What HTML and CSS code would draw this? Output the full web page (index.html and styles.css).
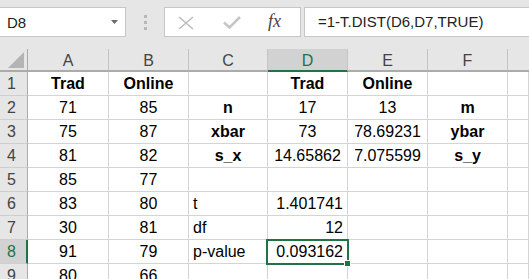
FILE: index.html
```html
<!DOCTYPE html>
<html>
<head>
<meta charset="utf-8">
<link rel="stylesheet" href="styles.css">
</head>
<body>
<div class="toolbar">
  <div class="namebox">
    <span class="name">D8</span>
    <svg class="drop" width="7" height="4" viewBox="0 0 7 4"><polygon points="0,0 7,0 3.5,4" fill="#6b6b6b"/></svg>
  </div>
  <svg class="grip" width="3" height="16" viewBox="0 0 3 16"><rect x="0" y="0" width="3" height="3" fill="#b8b8b8"/><rect x="0" y="6" width="3" height="3" fill="#b8b8b8"/><rect x="0" y="12" width="3" height="3" fill="#b8b8b8"/></svg>
  <div class="fxbox">
    <svg class="ico-x" width="16" height="14" viewBox="0 0 16 14"><path d="M1 1 L15 13 M15 1 L1 13" stroke="#bdbdbd" stroke-width="1.6" fill="none"/></svg>
    <svg class="ico-ok" width="18" height="13" viewBox="0 0 18 13"><path d="M1 6.5 L6.5 11.5 L17 1" stroke="#c6c6c6" stroke-width="2.6" fill="none"/></svg>
    <span class="fx">fx</span>
  </div>
  <div class="formula">=1-T.DIST(D6,D7,TRUE)</div>
</div>

<div class="sheet">
  <div class="hd corner"><svg width="18" height="18" viewBox="0 0 18 18"><polygon points="17,1 17,17 1,17" fill="#b4b4b4"/></svg></div>
  <div class="hd col">A</div>
  <div class="hd col">B</div>
  <div class="hd col">C</div>
  <div class="hd col active">D</div>
  <div class="hd col">E</div>
  <div class="hd col">F</div>
  <div class="hd col last"></div>

  <div class="rh">1</div>
  <div class="cell c b">Trad</div><div class="cell c b">Online</div><div class="cell"></div><div class="cell c b">Trad</div><div class="cell c b">Online</div><div class="cell"></div><div class="cell"></div>

  <div class="rh">2</div>
  <div class="cell c">71</div><div class="cell c">85</div><div class="cell c b">n</div><div class="cell c">17</div><div class="cell c">13</div><div class="cell c b">m</div><div class="cell"></div>

  <div class="rh">3</div>
  <div class="cell c">75</div><div class="cell c">87</div><div class="cell c b">xbar</div><div class="cell c">73</div><div class="cell c">78.69231</div><div class="cell c b">ybar</div><div class="cell"></div>

  <div class="rh">4</div>
  <div class="cell c">81</div><div class="cell c">82</div><div class="cell c b">s_x</div><div class="cell c">14.65862</div><div class="cell c">7.075599</div><div class="cell c b">s_y</div><div class="cell"></div>

  <div class="rh">5</div>
  <div class="cell c">85</div><div class="cell c">77</div><div class="cell"></div><div class="cell"></div><div class="cell"></div><div class="cell"></div><div class="cell"></div>

  <div class="rh">6</div>
  <div class="cell c">83</div><div class="cell c">80</div><div class="cell l">t</div><div class="cell r">1.401741</div><div class="cell"></div><div class="cell"></div><div class="cell"></div>

  <div class="rh">7</div>
  <div class="cell c">30</div><div class="cell c">81</div><div class="cell l">df</div><div class="cell r">12</div><div class="cell"></div><div class="cell"></div><div class="cell"></div>

  <div class="rh active">8</div>
  <div class="cell c">91</div><div class="cell c">79</div><div class="cell l">p-value</div><div class="cell r selected">0.093162<div class="sel"><div class="handle"></div></div></div><div class="cell"></div><div class="cell"></div><div class="cell"></div>

  <div class="rh">9</div>
  <div class="cell c">80</div><div class="cell c">66</div><div class="cell"></div><div class="cell"></div><div class="cell"></div><div class="cell"></div><div class="cell"></div>
</div>
</body>
</html>
```

FILE: styles.css
```css
* { box-sizing: border-box; }
html, body {
  margin: 0;
  padding: 0;
  width: 529px;
  height: 279px;
  overflow: hidden;
  background: #ffffff;
  font-family: "Liberation Sans", Arial, sans-serif;
}

.toolbar {
  height: 49px;
  background: #e6e6e6;
  display: flex;
  align-items: flex-start;
  padding-top: 7px;
}

.namebox {
  margin-left: -1px;
  width: 127px;
  height: 30px;
  background: #fff;
  border: 1px solid #c6c6c6;
  display: flex;
  align-items: center;
  justify-content: space-between;
  padding: 1px 7px 0 7px;
  font-size: 15px;
  color: #222;
}
.namebox .drop { margin-top: -2px; }

.grip {
  margin-left: 18px;
  margin-top: 8px;
}

.fxbox {
  margin-left: 17px;
  width: 137px;
  height: 30px;
  background: #fff;
  border: 1px solid #c6c6c6;
  display: flex;
  align-items: center;
  padding-left: 13px;
}
.ico-x { margin-top: 1px; }
.ico-ok { margin-left: 29px; margin-top: 1px; }
.fx {
  margin-left: 27px;
  font-family: "Liberation Serif", "Times New Roman", serif;
  font-style: italic;
  font-size: 18px;
  color: #444;
  margin-top: -1px;
}

.formula {
  margin-left: 3px;
  margin-right: -2px;
  flex: 1;
  height: 30px;
  background: #fff;
  border: 1px solid #c6c6c6;
  padding-left: 13px;
  font-size: 15px;
  line-height: 28px;
  color: #222;
  white-space: nowrap;
}

.sheet {
  display: grid;
  grid-template-columns: 28px 81px 80px 79px 80px 80px 80px 1fr;
  grid-template-rows: 23px repeat(9, 24px);
  font-size: 16px;
  color: #000;
}

.hd {
  background: #e6e6e6;
  border-bottom: 2px solid #ababab;
  border-right: 1px solid #c4c4c4;
  color: #444;
  text-align: center;
  line-height: 21px;
  padding-top: 1px;
}
.hd.corner {
  border-right: 1px solid #ababab;
  display: flex;
  align-items: flex-end;
  justify-content: flex-end;
  padding: 0 2px 1px 0;
}
.hd.active {
  background: #d2d2d2;
  border-bottom-color: #217346;
  color: #217346;
}
.hd.last { border-right: none; }

.rh {
  background: #e6e6e6;
  border-right: 1px solid #ababab;
  border-bottom: 1px solid #cfcfcf;
  color: #444;
  padding-left: 7px;
  padding-top: 1px;
  line-height: 22px;
}
.rh.active {
  background: #d2d2d2;
  border-right: 2px solid #217346;
  color: #217346;
}

.cell {
  border-right: 1px solid #d4d4d4;
  border-bottom: 1px solid #d4d4d4;
  line-height: 22px;
  padding-top: 1px;
  white-space: nowrap;
}
.c { text-align: center; }
.l { text-align: left; padding-left: 4px; }
.r { text-align: right; padding-right: 4px; }
.b { font-weight: bold; }

.selected { position: relative; }
.sel {
  position: absolute;
  left: -2px;
  top: -1px;
  right: -2px;
  bottom: -2px;
  border: 2px solid #217346;
}
.handle {
  position: absolute;
  right: -4px;
  bottom: -4px;
  width: 7px;
  height: 7px;
  background: #217346;
  border: 1px solid #fff;
}
```
